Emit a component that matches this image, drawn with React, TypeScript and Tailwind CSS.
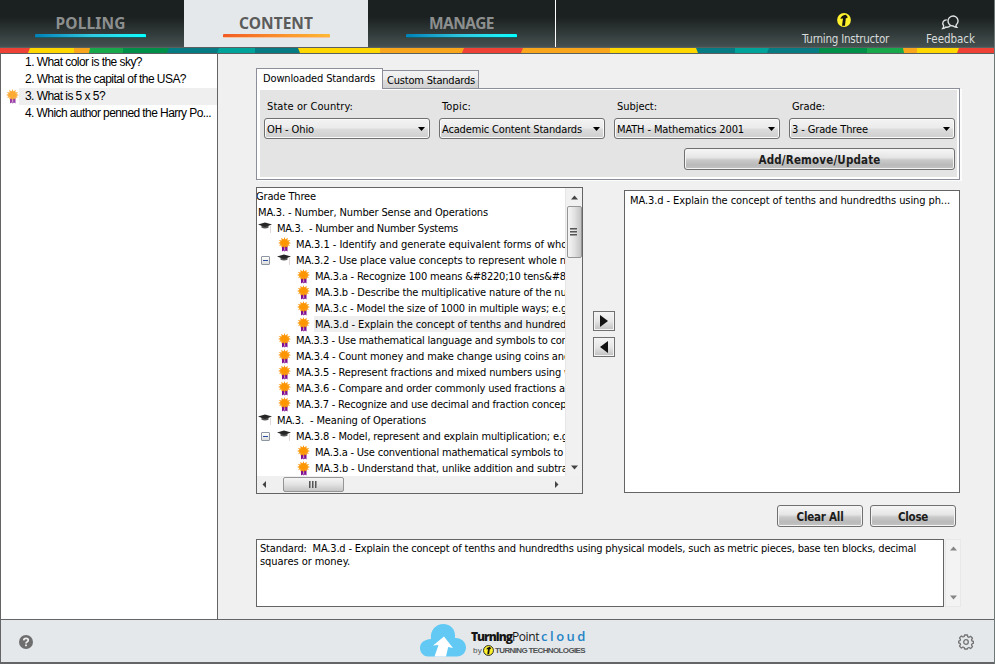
import { useLayoutEffect, useRef, useState, type ReactNode } from "react";

/** Text set to an exact width by spreading the difference over its letters. */
function Fit({ w, children, className = "" }: { w: number; children: string; className?: string }) {
  const ref = useRef<HTMLSpanElement>(null);
  const [spacing, setSpacing] = useState(0);
  useLayoutEffect(() => {
    const el = ref.current;
    if (!el) return;
    el.style.letterSpacing = "0px";
    const s = (w - el.getBoundingClientRect().width) / children.length;
    el.style.letterSpacing = `${s}px`;
    setSpacing(s);
  }, [w, children]);
  return (
    <span ref={ref} className={`inline-block shrink-0 whitespace-pre ${className}`} style={{ letterSpacing: spacing }}>
      {children}
    </span>
  );
}

function Award({ className = "" }: { className?: string }) {
  return (
    <svg className={`h-[15px] w-[13px] shrink-0 ${className}`} viewBox="0 0 13 15">
      <path d="M4 8h5.500v6.500l-1.500-1-1.300 1-1.200-1-1.500 1z" fill="#7f0f90" />
      <path d="M6.700 10.500v3" stroke="#d9b8e2" strokeWidth="0.900" />
      <path
        d="M6.500 0l.9 2.500L9.700.8l-.3 2.600 2.800-.4-1.700 2 2.500 1-2.500.9 1.500 1.900-2.600-.3.300 2.100-2.200-1.200-1 2-1-2-2.300 1.200.4-2.100-2.600.3L2.500 6.900 0 6l2.500-1L.8 3l2.800.4L3.300.8l2.300 1.700z"
        fill="#fb9a10"
      />
      <circle cx="6.500" cy="5.500" r="3" fill="#ff9600" />
    </svg>
  );
}

function Cap() {
  return (
    <svg className="h-[14px] w-[14px] shrink-0" viewBox="0 0 14 14">
      <path d="M3.500 4h7v2.800Q7 8.200 3.500 6.800z" fill="#555" />
      <path d="M0 3.600L7 1.400l7 2.200L7 5.900z" fill="#262626" />
      <path d="M12.500 4.500V12" stroke="#e6d9d9" strokeWidth="1" />
    </svg>
  );
}

type Row = { level: number; icon?: "cap" | "award"; box?: boolean; text: string; w: number; sel?: boolean };

const rows: Row[] = [
  { level: 0, text: "Grade Three", w: 60 },
  { level: 0, text: "MA.3. - Number, Number Sense and Operations", w: 230 },
  { level: 1, icon: "cap", text: "MA.3.  - Number and Number Systems", w: 181 },
  { level: 2, icon: "award", text: "MA.3.1 - Identify and generate equivalent forms of whole", w: 280 },
  { level: 2, icon: "cap", box: true, text: "MA.3.2 - Use place value concepts to represent whole nu", w: 276 },
  { level: 3, icon: "award", text: "MA.3.a - Recognize 100 means &#8220;10 tens&#82", w: 257 },
  { level: 3, icon: "award", text: "MA.3.b - Describe the multiplicative nature of the num", w: 261 },
  { level: 3, icon: "award", text: "MA.3.c - Model the size of 1000 in multiple ways; e.g.,", w: 258 },
  { level: 3, icon: "award", text: "MA.3.d - Explain the concept of tenths and hundredt", w: 255, sel: true },
  { level: 2, icon: "award", text: "MA.3.3 - Use mathematical language and symbols to com", w: 275 },
  { level: 2, icon: "award", text: "MA.3.4 - Count money and make change using coins and", w: 274 },
  { level: 2, icon: "award", text: "MA.3.5 - Represent fractions and mixed numbers using w", w: 276 },
  { level: 2, icon: "award", text: "MA.3.6 - Compare and order commonly used fractions an", w: 275 },
  { level: 2, icon: "award", text: "MA.3.7 - Recognize and use decimal and fraction concept", w: 274 },
  { level: 1, icon: "cap", text: "MA.3.  - Meaning of Operations", w: 149 },
  { level: 2, icon: "cap", box: true, text: "MA.3.8 - Model, represent and explain multiplication; e.g.", w: 275 },
  { level: 3, icon: "award", text: "MA.3.a - Use conventional mathematical symbols to", w: 248 },
  { level: 3, icon: "award", text: "MA.3.b - Understand that, unlike addition and subtrac", w: 258 },
];

function TreeRow({ row, first }: { row: Row; first: boolean }) {
  const gutter = ["w-0", "w-[1px]", "w-[20px]", "w-[39px]"][row.level];
  return (
    <div className="flex h-4 items-center">
      {row.icon && (
        <div className={`${gutter} flex shrink-0 justify-start`}>
          {row.box && (
            <span className="mt-px ml-[4px] flex h-[9px] w-[9px] items-center justify-center rounded-[1px] border border-[#8c95a0] bg-gradient-to-b from-white to-[#dcdcdc]">
              <span className="h-px w-[5px] bg-[#2d4fa0]" />
            </span>
          )}
        </div>
      )}
      {row.icon === "cap" && <div className="flex w-[18px] shrink-0 items-center"><Cap /></div>}
      {row.icon === "award" && <div className="flex w-[18px] shrink-0 items-center pl-px"><Award /></div>}
      <span className={`flex h-4 flex-1 items-center pl-px ${first ? "-ml-[2px]" : ""} ${row.sel ? "bg-[#efefef]" : ""}`}>
        <Fit w={row.w}>{row.text}</Fit>
      </span>
    </div>
  );
}

const bands: [string, number, number, number][] = [
  ["#067b83", 167, 298, 0], ["#ef4136", 0, 30, 0], ["#ffd800", 28, 74, 2], ["#f9a61c", 74, 89, 0],
  ["#17a84b", 89, 123, 1], ["#008f48", 123, 168, 0], ["#067b83", 167, 218, 2], ["#00a39a", 217, 255, 2],
  ["#067b83", 255, 299, 0], ["#ffd800", 298, 380, -2], ["#f9a61c", 380, 464, 0], ["#ef4136", 462, 523, 2],
  ["#f9a61c", 521, 610, 2], ["#ffd800", 610, 698, 0], ["#067b83", 696, 735, -2], ["#00a39a", 735, 769, 0],
  ["#067b83", 767, 819, 2], ["#008f48", 819, 867, 0], ["#17a84b", 867, 904, 0], ["#f9a61c", 903, 917, -1],
  ["#ffd800", 917, 958, 0], ["#ef4136", 957, 994, 2],
];

function Stripe() {
  return (
    <svg className="block h-[7px] w-[994px] border-y border-[#59605f]" viewBox="0 0 994 5" preserveAspectRatio="none">
      {bands.map(([c, a, b, s], i) => (
        <polygon key={i} fill={c} points={`${a + Math.max(s, 0)},0 ${b + 1},0 ${b + 1},5 ${a - Math.min(s, 0)},5`} />
      ))}
    </svg>
  );
}

function NavTab({ label, w, active, className = "" }: { label: string; w: number; active?: boolean; className?: string }) {
  return (
    <div className={`flex h-[47px] flex-col items-center pt-[14px] ${className}`}>
      <Fit w={w} className={`font-['Noto_Sans',sans-serif] text-[15.500px] leading-[19px] font-bold ${active ? "text-[#5b5b5b]" : "text-[#8d8f8f]"}`}>{label}</Fit>
      <div
        className={`mt-[1px] h-[4px] rounded-[1px] border-b ${
          active
            ? "w-[107px] border-[#f7c4a0] bg-gradient-to-r from-[#f15a24] to-[#fdb933]"
            : "w-[111px] border-[#145c66] bg-gradient-to-r from-[#0080b8] via-[#30c8e0] to-[#00ffff]"
        }`}
      />
    </div>
  );
}

function Select({ label, value, w, lw }: { label: string; value: string; w: number; lw: number }) {
  return (
    <div className="w-[166px]">
      <div className="flex h-[14px] items-center pl-[3px]"><Fit w={lw}>{label}</Fit></div>
      <div className="mt-[5px] flex h-[21px] items-center justify-between rounded-[3px] border border-[#707070] bg-[linear-gradient(#f3f3f3_0%,#ebebeb_48%,#dcdcdc_52%,#cecece_100%)] pr-1 pl-[2px] shadow-[inset_0_0_0_1px_#fafafa]">
        <Fit w={w} className="mt-px">{value}</Fit>
        <svg className="h-1 w-[7px]" viewBox="0 0 7 4"><path d="M0 0h7L3.500 4z" fill="#000" /></svg>
      </div>
    </div>
  );
}

function Button({ children, w, className = "" }: { children: string; w: number; className?: string }) {
  return (
    <button className={`flex h-[22px] items-center justify-center rounded-[3px] border border-[#707070] bg-[linear-gradient(#f6f6f6_0%,#e6e6e6_42%,#c9c9c9_56%,#bababa_80%,#c4c4c4_100%)] pt-[2px] text-[11.500px] leading-[14px] font-bold text-[#1c1c1c] shadow-[inset_0_0_0_1px_#f4f4f4] ${className}`}>
      <Fit w={w}>{children}</Fit>
    </button>
  );
}

function MoveButton({ d }: { d: string }) {
  return (
    <button className="flex h-5 w-[22px] items-center justify-center border border-[#707070] bg-[linear-gradient(#f4f4f4,#e6e6e6_50%,#bfbfbf)] shadow-[inset_0_0_0_1px_#f3f3f3]">
      <svg className="h-3 w-2" viewBox="0 0 8 12"><path d={d} fill="#111" /></svg>
    </button>
  );
}

function Arrow({ d, color = "#444", className = "" }: { d: string; color?: string; className?: string }) {
  return <svg className={`h-[7px] w-[7px] ${className}`} viewBox="0 0 7 7"><path d={d} fill={color} /></svg>;
}
const UP = "M0 5.500L3.500 1.500 7 5.500z";
const DOWN = "M0 1.500h7L3.500 5.500z";

function Tree() {
  return (
    <div className="h-[307px] w-[327px] border border-[#646464] bg-white">
      <div className="flex h-[288px]">
        <div className="w-[308px] overflow-hidden">
          {rows.map((r, i) => <TreeRow key={i} row={r} first={i === 0} />)}
        </div>
        <div className="flex w-[17px] flex-col items-center border-l border-[#e6e6e6] bg-[#f1f1f1]">
          <div className="flex h-[18px] items-center"><Arrow d={UP} /></div>
          <div className="flex h-[52px] w-[15px] flex-col items-center justify-center gap-px rounded-[2px] border border-[#959595] bg-gradient-to-r from-[#f5f5f5] via-[#e2e2e2] to-[#c4c4c4] pr-[2px]">
            {[0, 1, 2].map((i) => <span key={i} className="h-[2px] w-[7px] border-b border-[#999] bg-[#555]" />)}
          </div>
          <div className="mt-auto flex h-[17px] items-center"><Arrow d={DOWN} /></div>
        </div>
      </div>
      <div className="flex h-[17px] items-start bg-[#f0f0f0] pt-px">
        <div className="flex w-[26px] pt-[4px] pl-[4px]"><Arrow d="M5 0v7L1.500 3.500z" /></div>
        <div className="flex h-[15px] w-[61px] items-center justify-center gap-px rounded-[2px] border border-[#959595] bg-gradient-to-b from-[#f5f5f5] via-[#e2e2e2] to-[#c4c4c4] pr-[2px]">
          {[0, 1, 2].map((i) => <span key={i} className="h-[7px] w-[2px] border-r border-[#999] bg-[#555]" />)}
        </div>
        <div className="mr-[22px] ml-auto pt-[4px]"><Arrow d="M2 0v7l3.500-3.500z" /></div>
      </div>
    </div>
  );
}

const questions = [
  { text: "1. What color is the sky?", w: 117 },
  { text: "2. What is the capital of the USA?", w: 161 },
  { text: "3. What is 5 x 5?", w: 80, sel: true },
  { text: "4. Which author penned the Harry Po...", w: 186 },
];

function TurnIcon({ className = "" }: { className?: string }) {
  return (
    <svg className={className} viewBox="0 0 14 14">
      <circle cx="7" cy="7" r="6.900" fill="#fff22d" />
      <path d="M3.300 5.800Q4.500 2.500 8.500 1.800q2.400 1 2 3.200L8.800 5.300 8 12.700H5l1-7.200z" fill="#15150f" />
    </svg>
  );
}

function HeaderLink({ icon, label, w, className = "" }: { icon: ReactNode; label: string; w: number; className?: string }) {
  return (
    <div className={`flex flex-col items-center text-[#d9dcdc] ${className}`}>
      <div className="flex h-[18px] items-center">{icon}</div>
      <Fit w={w} className="mt-[3px] text-[11.500px] leading-[15px]">{label}</Fit>
    </div>
  );
}

function Footer() {
  return (
    <footer className="flex h-[45px] items-center justify-between border-t border-b-2 border-l border-[#636567] bg-[#e4e8eb] pr-[20px] pl-[18px]">
      <svg className="mt-[2px] h-[14px] w-[14px]" viewBox="0 0 14 14">
        <circle cx="7" cy="7" r="7" fill="#6e6e6e" />
        <path d="M4.700 5.300Q4.900 3.300 7 3.300q2.300 0 2.300 1.800 0 1.100-1.100 1.700Q7 7.400 7 8.500" fill="none" stroke="#f0f0f0" strokeWidth="1.700" />
        <rect x="6.100" y="9.500" width="1.800" height="1.700" fill="#f0f0f0" />
      </svg>
      <div className="ml-[17px] flex items-start gap-[5px]">
        <svg className="-mt-px h-[33px] w-[46px]" viewBox="0 0 46 33">
          <path d="M8 32.500C3 32.500 0 28 0 24c0-5 4-8.500 11-9C10 7 15 0 23.500 0 30 0 36 5 35 14c6-.5 11 4 11 9.500 0 5-4 9-9 9z" fill="#62c9f5" />
          <path d="M13 21.500L24 12.500l9 11.500-4.800-1L26 32.500H14.500L18.500 21z" fill="#fff" />
        </svg>
        <div className="pt-[3px]">
          <div className="flex h-[17px] items-center font-['Open_Sans','Noto_Sans',sans-serif]">
            <Fit w={41} className="text-[12px] font-extrabold text-[#161616]">Turning</Fit>
            <Fit w={27} className="text-[12px] text-[#161616]">Point</Fit>
            <Fit w={47} className="ml-[2px] text-[13px] font-semibold text-[#2484c6]">cloud</Fit>
          </div>
          <div className="flex h-[10px] items-center pl-[2px] font-['Liberation_Sans',Arial,sans-serif] text-[8px] text-[#505254]">
            <Fit w={9}>by</Fit>
            <svg className="mx-px h-[11px] w-[11px]" viewBox="0 0 14 14">
              <circle cx="7" cy="7" r="6.300" fill="#fff22d" stroke="#222" strokeWidth="1.200" />
              <path d="M4 5.500Q5 3 8.500 2.300q2 1 1.600 2.800l-1.500.2-.8 6.500H5.500l.8-6.500z" fill="#111" />
            </svg>
            <Fit w={90} className="font-bold">TURNING TECHNOLOGIES</Fit>
          </div>
        </div>
      </div>
      <svg className="mt-[2px] h-[16px] w-[16px]" viewBox="0 0 16 16" fill="none" stroke="#737373" strokeWidth="1.300" strokeLinejoin="round">
        <path d="M6.600 1h2.800l.4 1.800 1.200.5 1.600-1 1.900 1.900-1 1.600.5 1.200 1.500.4v1.800l-1.500.6-.5 1.200 1 1.600-1.900 1.900-1.600-1-1.200.5L9.400 15H6.600l-.4-1.500-1.200-.5-1.600 1-1.900-1.900 1-1.600-.5-1.200L.7 8.900V7.100L2 6.700l.5-1.200-1-1.600 1.900-1.900 1.600 1 1.200-.5z" />
        <circle cx="8" cy="8" r="2.300" />
      </svg>
    </footer>
  );
}

export default function App() {
  return (
    <div className="h-[664px] w-[995px] overflow-hidden border-r border-[#6d7776] bg-[#f0f0f0] font-['DejaVu_Sans_Condensed','DejaVu_Sans',sans-serif] text-[11px] leading-[13px] text-black">
      <header className="flex h-[47px] bg-[linear-gradient(#1b2020_0%,#1b2020_36%,#445150_100%)]">
        <NavTab label="POLLING" w={70} className="w-[184px] pr-[3px]" />
        <NavTab label="CONTENT" w={74} active className="w-[184px] bg-[#e4e8eb]" />
        <NavTab label="MANAGE" w={65} className="w-[188px] border-r border-white" />
        <div className="ml-auto flex pt-[11px]">
          <HeaderLink label="Turning Instructor" w={87} className="w-[87px]" icon={<TurnIcon className="mr-[3px] h-[14px] w-[14px]" />} />
          <HeaderLink
            label="Feedback"
            w={49}
            className="mr-[19px] ml-[37px] w-[49px]"
            icon={
              <svg className="mt-[4px] mr-[2px] h-[15px] w-[18px]" viewBox="0 0 18 15" fill="none" stroke="#e2e4e4" strokeWidth="1.400">
                <path d="M15.300 9.800A5 5 0 1 0 12.200 11q1.200 1.100 3.400 1.200-1-1-.3-2.400z" />
                <path d="M5.800 4.900C2.300 4.700.6 8.200 2.600 10.600q.2 1.800-.8 2.900 1.900 0 2.900-1.400 2.700.7 4.500-1.300" />
              </svg>
            }
          />
        </div>
      </header>
      <Stripe />

      <main className="flex h-[565px]">
        <aside className="w-[218px] border-x border-[#646464] bg-white font-['Liberation_Sans',Arial,sans-serif] text-[12px]">
          {questions.map((q) => (
            <div key={q.text} className="flex h-[17px] items-center">
              <span className="flex w-[18px] shrink-0 justify-end">{q.sel && <Award className="opacity-80" />}</span>
              <span className={`flex h-full flex-1 items-center pl-[6px] ${q.sel ? "bg-[#efefef]" : ""}`}><Fit w={q.w}>{q.text}</Fit></span>
            </div>
          ))}
        </aside>

        <section className="flex-1 pt-[14px] pl-[38px]">
          <div className="flex h-5 items-end">
            <div className="relative z-10 -mb-px flex h-[21px] w-[127px] items-center border border-b-0 border-[#8c8e99] bg-white pb-[2px] pl-[6px]"><Fit w={112}>Downloaded Standards</Fit></div>
            <div className="flex h-[18px] w-[96px] items-center border border-b-0 border-l-0 border-[#8c8e99] bg-[linear-gradient(#f3f3f3_0%,#ebebeb_50%,#dcdcdc_55%,#d0d0d0_100%)] pt-px pl-[4px]"><Fit w={88}>Custom Standards</Fit></div>
          </div>
          <div className="h-[92px] w-[704px] border border-[#8c8e99] bg-white p-[2px] pt-px pl-[3px] shadow-[2px_1px_0_#fcfcfc]">
            <div className="h-full bg-[#e4e4e4] pt-[9px] pl-[4px]">
              <div className="flex gap-[9px]">
                <Select label="State or Country:" lw={86} value="OH - Ohio" w={47} />
                <Select label="Topic:" lw={29} value="Academic Content Standards" w={140} />
                <Select label="Subject:" lw={40} value="MATH - Mathematics 2001" w={127} />
                <Select label="Grade:" lw={33} value="3 - Grade Three" w={76} />
              </div>
              <Button w={122} className="mt-[9px] ml-[420px] w-[271px]">Add/Remove/Update</Button>
            </div>
          </div>

          <div className="mt-[7px] flex">
            <Tree />
            <div className="flex w-[41px] flex-col gap-[6px] pt-[124px] pl-[10px]">
              <MoveButton d="M0 0l8 6-8 6z" />
              <MoveButton d="M8 0L0 6l8 6z" />
            </div>
            <div className="mt-[3px] h-[303px] w-[336px] border border-[#646464] bg-white pt-[3px] pl-[5px]">
              <Fit w={320}>MA.3.d - Explain the concept of tenths and hundredths using ph...</Fit>
            </div>
          </div>

          <div className="mt-[11px] ml-[521px] flex gap-[7px]">
            <Button w={47} className="w-[86px]">Clear All</Button>
            <Button w={30} className="w-[86px]">Close</Button>
          </div>

          <div className="mt-[12px] flex gap-px">
            <div className="flex h-[68px] w-[688px] flex-col border border-[#646464] bg-white pt-[2px] pl-[3px]">
              <span className="h-[13px]"><Fit w={656}>Standard:  MA.3.d - Explain the concept of tenths and hundredths using physical models, such as metric pieces, base ten blocks, decimal</Fit></span>
              <span><Fit w={90}>squares or money.</Fit></span>
            </div>
            <div className="flex h-[68px] w-4 flex-col items-center justify-between border border-[#e8e8e8] bg-[#f3f3f3] py-[5px]">
              <Arrow d={UP} color="#858585" />
              <Arrow d={DOWN} color="#858585" />
            </div>
          </div>
        </section>
      </main>
      <Footer />
    </div>
  );
}
